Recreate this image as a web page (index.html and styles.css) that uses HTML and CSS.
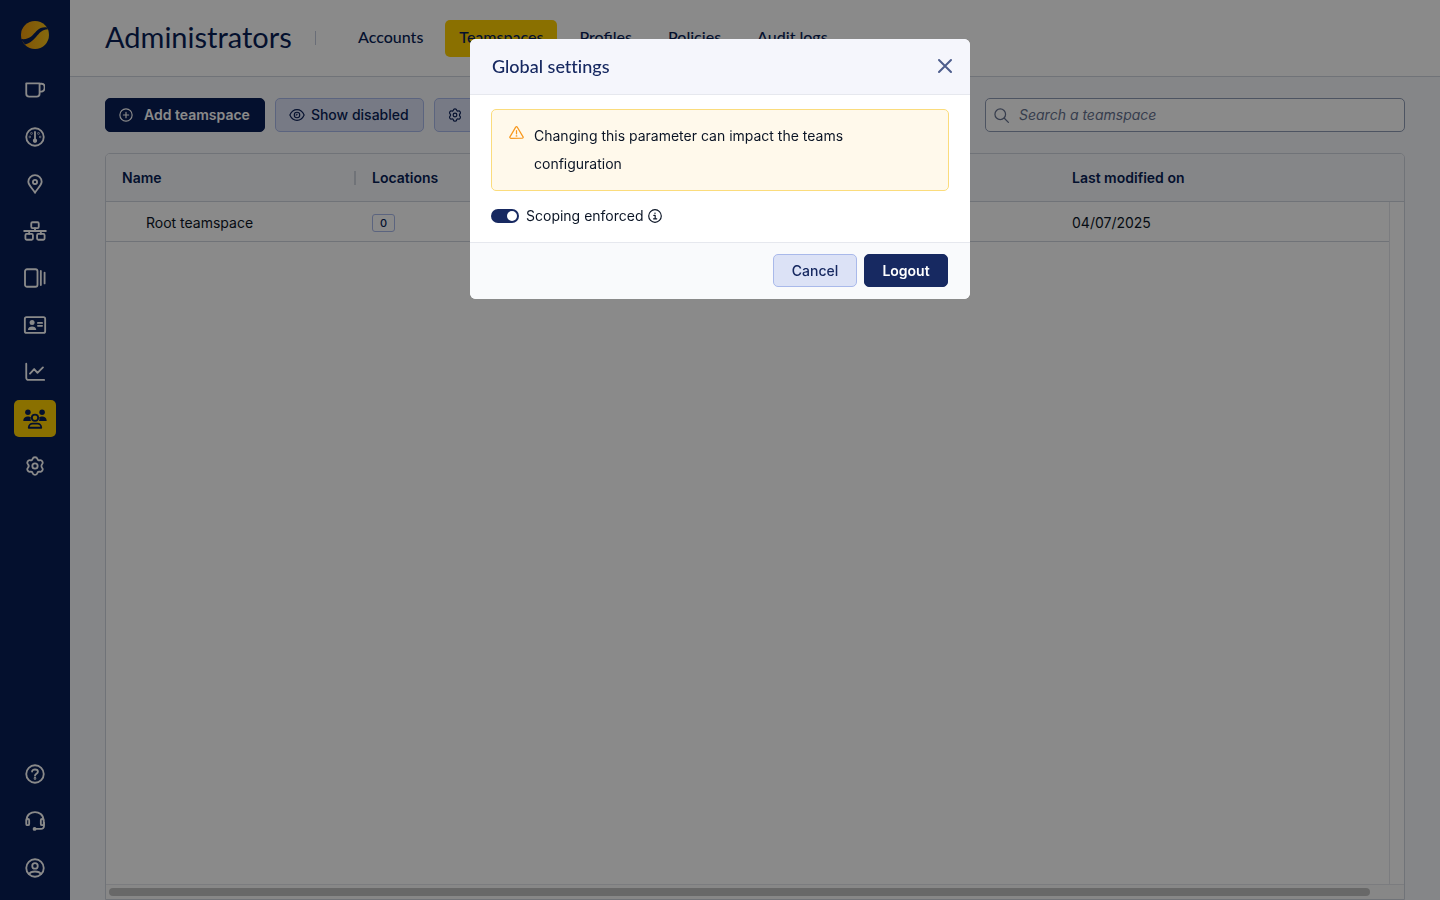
FILE: index.html
```
<!DOCTYPE html>
<html lang="en">
<head>
    <meta charset="UTF-8">
    <meta name="viewport" content="width=device-width, initial-scale=1.0">
    <title>Administrators</title>
    <link rel="stylesheet" href="styles.css">
</head>
<body>
    <!-- Shared icons -->
    <svg class="sprite" aria-hidden="true">
        <symbol id="gear" viewBox="0 0 24 24">
            <path d="M9.2 3.400 C9.800 0.800 14.200 0.800 14.800 3.400 C15.200 4.900 16.300 5.500 17.700 5.100 C20.300 4.400 22.500 8 20.600 9.800 C19.400 11 19.400 13 20.600 14.200 C22.500 16 20.300 19.600 17.700 18.900 C16.300 18.500 15.200 19.100 14.800 20.600 C14.200 23.200 9.800 23.200 9.200 20.600 C8.800 19.100 7.700 18.500 6.300 18.900 C3.700 19.600 1.500 16 3.400 14.200 C4.600 13 4.600 11 3.400 9.800 C1.500 8 3.700 4.400 6.300 5.100 C7.700 5.500 8.800 4.900 9.200 3.400 Z"/>
            <circle cx="12" cy="12" r="3.2"/>
        </symbol>
    </svg>

    <div class="app">
        <nav class="sidebar" aria-label="Main">
            <a href="#" class="logo" aria-label="Home">
                <svg viewBox="0 0 28 28">
                    <defs>
                        <linearGradient id="sun" x1="0" x2="1">
                            <stop offset="0" stop-color="#ee9a0c"/>
                            <stop offset="1" stop-color="#f6c31a"/>
                        </linearGradient>
                    </defs>
                    <circle cx="14" cy="14" r="14" fill="url(#sun)"/>
                    <path class="logo-wave" d="M0 18 C9 19 11.500 14 15.500 10 C19 6.800 22 6 26 6.500 L27 8.200 C21 8.200 18.500 12 15 16 C11.500 20 8 22.800 4 23.500 L2 21 Z"/>
                </svg>
            </a>
            <a href="#" class="nav-item" aria-label="Rooms">
                <svg class="icon" viewBox="0 0 24 24"><path d="M1.500 4 H17.500 V16.500 a3.500 3.500 0 0 1 -3.500 3.500 H5 a3.500 3.500 0 0 1 -3.500 -3.500 Z M17.500 4.500 H20 a3.500 3.500 0 0 1 3.500 3.500 v2 a4 4 0 0 1 -4 4 h-2"/></svg>
            </a>
            <a href="#" class="nav-item" aria-label="Dashboard">
                <svg class="icon" viewBox="0 0 24 24"><circle cx="12" cy="12" r="10.500"/><path d="M12 6 v9"/><circle class="solid" cx="12" cy="16.500" r="1.500"/><g class="solid"><circle cx="7.800" cy="7.800" r=".3"/><circle cx="16.200" cy="7.800" r=".3"/><circle cx="5.800" cy="12" r=".3"/><circle cx="18.200" cy="12" r=".3"/></g></svg>
            </a>
            <a href="#" class="nav-item" aria-label="Locations">
                <svg class="icon" viewBox="0 0 24 24"><path d="M12 22.500 C10 18.500 4 13.500 4 9.300 a8 8 0 0 1 16 0 C20 13.500 14 18.500 12 22.500 Z"/><circle cx="12" cy="9.500" r="2.500"/></svg>
            </a>
            <a href="#" class="nav-item" aria-label="Network">
                <svg class="icon icon-wide" viewBox="0 0 28 24"><rect x="9.500" y="1.500" width="9" height="7" rx="1.500"/><rect x="2.500" y="15.500" width="9" height="7" rx="1.500"/><rect x="16.500" y="15.500" width="9" height="7" rx="1.500"/><path d="M1 12 H27 M14 8.500 V12 M7 12 v3.500 M21 12 v3.500"/></svg>
            </a>
            <a href="#" class="nav-item" aria-label="Panels">
                <svg class="icon icon-wide" viewBox="0 0 28 24"><rect x="2" y="1.500" width="15" height="21" rx="2.500"/><path d="M21 3.500 V20.500 M25.500 5.500 V18.500"/></svg>
            </a>
            <a href="#" class="nav-item" aria-label="Contacts">
                <svg class="icon icon-wide" viewBox="0 0 28 24"><rect x="1.800" y="2.500" width="24.400" height="19" rx="2"/><path d="M17.500 9.500 H22.500 M17.500 13 H22.500"/><g class="filled"><circle cx="10.500" cy="9" r="3"/><path d="M5.500 18 C5.500 12.500 15.500 12.500 15.500 18 Z"/></g></svg>
            </a>
            <a href="#" class="nav-item" aria-label="Analytics">
                <svg class="icon" viewBox="0 0 24 24"><path d="M1.500 2 V19 a2.500 2.500 0 0 0 2.500 2.500 H23 M6 14 L11 8.500 L15 13 L21.500 6.500"/></svg>
            </a>
            <a href="#" class="nav-item active" aria-label="Administrators" aria-current="page">
                <svg class="icon icon-wide" viewBox="0 0 28 24"><g class="filled"><circle cx="5.500" cy="4" r="3.300"/><circle cx="22.500" cy="4" r="3.300"/><path d="M0 14.500 C0 8 7 8.500 9 10 C8.500 12 8.700 13 9.200 14.500 Z M28 14.500 C28 8 21 8.500 19 10 C19.500 12 19.300 13 18.800 14.500 Z"/></g><circle cx="14" cy="10.500" r="3.800"/><path d="M6.500 22.500 C6.500 19 9 17.500 11 17.500 h6 c2 0 4.500 1.500 4.500 5 Z"/></svg>
            </a>
            <a href="#" class="nav-item" aria-label="Settings">
                <svg class="icon"><use href="#gear"/></svg>
            </a>
            <div class="nav-bottom">
                <a href="#" class="nav-item" aria-label="Help">
                    <svg class="icon" viewBox="0 0 24 24"><circle cx="12" cy="12" r="10.500"/><path d="M8.500 9 C8.500 5.800 15.500 5.800 15.500 9.300 C15.500 11.700 12 11.600 12 14"/><circle class="solid" cx="12" cy="17.300" r=".5"/></svg>
                </a>
                <a href="#" class="nav-item" aria-label="Support">
                    <svg class="icon" viewBox="0 0 24 24"><path d="M2 10.500 C2 -1.800 22 -1.800 22 10.500 M22.800 14 V18 a3.500 3.500 0 0 1 -3.500 3.500 H12"/><rect x="1.500" y="9.500" width="3.500" height="7.500" rx="1.500"/><rect x="19" y="9.500" width="3.500" height="7.500" rx="1.500"/><circle class="solid" cx="11.500" cy="21.500" r="1.200"/></svg>
                </a>
                <a href="#" class="nav-item" aria-label="Profile">
                    <svg class="icon" viewBox="0 0 24 24"><circle cx="12" cy="12" r="10.500"/><circle cx="12" cy="9.500" r="3.300"/><path d="M5 19.300 C7 15.200 17 15.200 19 19.300"/></svg>
                </a>
            </div>
        </nav>

        <div class="content">
            <header class="page-header">
                <h1>Administrators</h1>
                <nav class="tabs" aria-label="Sections">
                    <a href="#" class="tab">Accounts</a>
                    <a href="#" class="tab active">Teamspaces</a>
                    <a href="#" class="tab">Profiles</a>
                    <a href="#" class="tab">Policies</a>
                    <a href="#" class="tab">Audit logs</a>
                </nav>
            </header>

            <main class="main">
                <div class="toolbar">
                    <button type="button" class="btn btn-primary btn-add">
                        <svg class="icon" viewBox="0 0 24 24"><circle cx="12" cy="12" r="10.500"/><path d="M12 7.500 v9 M7.500 12 h9"/></svg>
                        Add teamspace
                    </button>
                    <button type="button" class="btn btn-light">
                        <svg class="icon icon-eye" viewBox="0 0 28 24"><path d="M1.500 12 C7 -0.500 21 -0.500 26.500 12 C21 24.500 7 24.500 1.500 12 Z"/><circle cx="14" cy="12" r="4.800"/><path d="M14 10.500 a1.500 1.500 0 0 1 -1.500 1.500"/></svg>
                        Show disabled
                    </button>
                    <button type="button" class="btn btn-light btn-settings" aria-label="Settings">
                        <svg class="icon"><use href="#gear"/></svg>
                    </button>
                    <label class="search">
                        <svg class="icon" viewBox="0 0 24 24"><circle cx="10" cy="10" r="8.500"/><path d="M16.500 16.500 L23 23"/></svg>
                        <input type="search" placeholder="Search a teamspace" aria-label="Search a teamspace">
                    </label>
                </div>

                <section class="grid">
                    <table>
                        <colgroup>
                            <col class="col-name">
                            <col class="col-locations">
                            <col>
                            <col class="col-gutter">
                        </colgroup>
                        <thead>
                            <tr>
                                <th scope="col"><span class="th-label">Name</span></th>
                                <th scope="col">Locations</th>
                                <th scope="col">Last modified on</th>
                                <td></td>
                            </tr>
                        </thead>
                        <tbody>
                            <tr>
                                <td class="cell-name">Root teamspace</td>
                                <td><span class="count">0</span></td>
                                <td>04/07/2025</td>
                                <td class="gutter"></td>
                            </tr>
                        </tbody>
                    </table>
                    <div class="grid-space"></div>
                    <div class="scrollbar"><div class="thumb"></div></div>
                </section>
            </main>
        </div>
    </div>

    <div class="overlay">
        <div class="modal" role="dialog" aria-modal="true" aria-labelledby="modal-title">
            <div class="modal-header">
                <h2 id="modal-title">Global settings</h2>
                <button type="button" class="close" aria-label="Close">
                    <svg class="icon" viewBox="0 0 16 16"><path d="M2 2 L14 14 M14 2 L2 14"/></svg>
                </button>
            </div>
            <div class="modal-body">
                <div class="alert" role="alert">
                    <svg class="icon" viewBox="0 0 24 24"><path d="M10.700 3.500 a1.500 1.500 0 0 1 2.600 0 L22.500 19 a1.500 1.500 0 0 1 -1.300 2.200 H2.800 a1.500 1.500 0 0 1 -1.300 -2.200 Z M12 9 v5"/><circle class="solid" cx="12" cy="17.500" r=".4"/></svg>
                    <p>Changing this parameter can impact the teams configuration</p>
                </div>
                <div class="field">
                    <input type="checkbox" class="switch" id="scoping" checked>
                    <label for="scoping">Scoping enforced</label>
                    <svg class="icon" viewBox="0 0 24 24"><circle cx="12" cy="12" r="10.800"/><path d="M10 11 h2.300 v5.500 M9.500 16.800 h5.500"/><circle class="solid" cx="12" cy="7.200" r=".4"/></svg>
                </div>
            </div>
            <div class="modal-footer">
                <button type="button" class="btn btn-light">Cancel</button>
                <button type="button" class="btn btn-primary">Logout</button>
            </div>
        </div>
    </div>
</body>
</html>
```
FILE: styles.css
```
* {
    box-sizing: border-box;
}
body {
    margin: 0;
    font-family: Inter, "Liberation Sans", sans-serif;
    font-size: 14px;
    color: #0b1526;
}
h1, h2, p {
    margin: 0;
}
button, input {
    font: inherit;
}
.sprite {
    display: none;
}
.icon {
    flex: none;
    width: 20px;
    height: 20px;
    fill: none;
    stroke: currentColor;
    stroke-width: 2;
    stroke-linecap: round;
    stroke-linejoin: round;
}
.icon .filled {
    fill: currentColor;
    stroke: none;
}
.icon .solid {
    fill: currentColor;
}
.icon-wide {
    width: 24px;
}
.app {
    display: flex;
    min-height: 100vh;
}

/* Sidebar */
.sidebar {
    display: flex;
    flex-direction: column;
    align-items: center;
    gap: 10px;
    flex: none;
    width: 70px;
    padding: 21px 0 14px;
    background-color: #091e56;
}
.logo {
    height: 28px;
    margin-bottom: 12px;
}
.logo svg {
    width: 28px;
    height: 28px;
}
.logo-wave {
    fill: #091e56;
}
.nav-item {
    display: flex;
    align-items: center;
    justify-content: center;
    width: 42px;
    height: 37px;
    border-radius: 5px;
    color: #fff;
}
.nav-item .icon {
    stroke-width: 2.200;
}
.nav-item.active {
    background-color: #ffcf00;
    color: #091e56;
}
.nav-bottom {
    display: flex;
    flex-direction: column;
    gap: 10px;
    margin-top: auto;
}

/* Header */
.content {
    display: flex;
    flex-direction: column;
    flex: 1;
    min-width: 0;
}
.page-header {
    display: flex;
    align-items: center;
    height: 77px;
    padding: 0 35px;
    border-bottom: 1px solid #d0d4de;
    background-color: #fff;
    font-family: Lato, "Open Sans", sans-serif;
    color: #091e56;
}
.page-header h1 {
    flex: none;
    width: 210px;
    padding-bottom: 4px;
    font-size: 29px;
    font-weight: 400;
}
.tabs {
    display: flex;
    gap: 8px;
    align-items: center;
}
.tabs::before {
    content: "";
    width: 1px;
    height: 14px;
    margin-right: 20px;
    background-color: #c3c9dc;
}
.tab {
    padding: 0 14px 4px;
    border-radius: 5px;
    font-size: 16px;
    font-weight: 500;
    line-height: 33px;
    color: inherit;
    text-decoration: none;
}
.tab.active {
    background-color: #ffcf00;
}

/* Toolbar */
.main {
    display: flex;
    flex-direction: column;
    gap: 21px;
    flex: 1;
    padding: 21px 35px 0;
    background-color: #f5f7fb;
}
.toolbar {
    display: flex;
    gap: 10px;
}
.btn {
    display: flex;
    align-items: center;
    justify-content: center;
    height: 34px;
    padding: 0 14px 0 13px;
    border: 1px solid #a9b9ea;
    border-radius: 5px;
    line-height: 16px;
    cursor: pointer;
}
.btn-primary {
    border-color: #172961;
    background-color: #172961;
    color: #fff;
    font-weight: 600;
}
.btn-light {
    background-color: #dce2f6;
    color: #172961;
    font-weight: 500;
}
.btn .icon {
    width: 14px;
    height: 14px;
}
.btn .icon-eye {
    width: 16px;
    margin-right: 6px;
}
.toolbar .btn-primary {
    border-color: #091e56;
    background-color: #091e56;
}
.toolbar .btn-light {
    color: #091e56;
}
.btn-add {
    gap: 11px;
}
.btn-settings {
    justify-content: flex-start;
    width: 150px;
}
.search {
    display: flex;
    align-items: center;
    gap: 10px;
    width: 420px;
    height: 34px;
    margin-left: auto;
    padding: 0 8px;
    border: 1px solid #8f9bb5;
    border-radius: 5px;
    background-color: #fff;
    color: #66728f;
}
.search .icon {
    width: 15px;
    height: 15px;
}
.search input {
    flex: 1;
    min-width: 0;
    height: 16px;
    padding: 0;
    border: 0;
    outline: 0;
    background: none;
    line-height: 16px;
}
.search input::placeholder {
    color: #66728f;
    font-style: italic;
    opacity: 1;
}

/* Teamspace grid */
.grid {
    display: flex;
    flex-direction: column;
    flex: 1;
    overflow: hidden;
    border: 1px solid #d0d4de;
    border-radius: 5px 5px 0 0;
    background-color: #fff;
}
table {
    width: 100%;
    table-layout: fixed;
    border-collapse: separate;
    border-spacing: 0;
}
.col-name {
    width: 250px;
}
.col-locations {
    width: 700px;
}
.col-gutter {
    width: 15px;
}
th, td {
    padding: 0 0 0 16px;
    text-align: left;
    border-bottom: 1px solid #d0d4de;
}
thead th, thead td {
    height: 48px;
    background-color: #f5f7fb;
    color: #091e56;
    font-weight: 600;
}
.th-label {
    display: block;
    border-right: 2px solid #d0d4de;
    line-height: 14px;
}
tbody td {
    height: 40px;
    padding-top: 2px;
}
tbody .cell-name {
    padding-left: 40px;
}
tbody .gutter {
    padding: 0;
    border-bottom: 0;
    border-left: 1px solid #e3e5ea;
}
.count {
    display: block;
    width: 23px;
    border: 1px solid #a9b9ea;
    border-radius: 3px;
    color: #091e56;
    font-size: 11px;
    font-weight: 500;
    line-height: 16px;
    text-align: center;
}
.grid-space {
    flex: 1;
    margin-right: 14px;
    border-right: 1px solid #e3e5ea;
}
.scrollbar {
    height: 15px;
    padding: 3px 34px 0 3px;
    border-top: 1px solid #e3e5ea;
    background-color: #fafafa;
}
.thumb {
    height: 8px;
    border-radius: 4px;
    background-color: #c1c1c1;
}

/* Modal */
.overlay {
    position: fixed;
    inset: 0;
    padding-top: 39px;
    background-color: rgba(0, 0, 0, 0.46);
}
.modal {
    width: 500px;
    max-width: 100%;
    margin: 0 auto;
    overflow: hidden;
    border-radius: 6px;
    background-color: #fff;
}
.modal-header {
    display: flex;
    align-items: center;
    justify-content: space-between;
    height: 56px;
    padding: 0 17px 2px 22px;
    border-bottom: 1px solid #e6e8ee;
    background-color: #f5f6fc;
}
.modal-header h2 {
    font-family: Lato, "Open Sans", sans-serif;
    font-size: 18px;
    font-weight: 500;
    font-variant-ligatures: none;
    color: #172961;
}
.close {
    display: flex;
    padding: 0;
    border: 0;
    background: none;
    color: #4d5d8c;
    cursor: pointer;
}
.close .icon {
    width: 16px;
    height: 16px;
}
.modal-body {
    padding: 14px 21px 16px;
}
.alert {
    display: flex;
    gap: 10px;
    padding: 12px 17px;
    border: 1px solid #fbdc7c;
    border-radius: 5px;
    background-color: #fff9eb;
}
.alert .icon {
    width: 15px;
    height: 15px;
    margin-top: 3px;
    color: #f8981d;
}
.alert p {
    max-width: 340px;
    line-height: 28px;
}
.field {
    display: flex;
    align-items: center;
    height: 20px;
    margin-top: 15px;
}
.field label {
    margin: 0 4px 0 7px;
    line-height: 18px;
}
.field .icon {
    width: 14px;
    height: 14px;
}
.switch {
    display: flex;
    align-items: center;
    justify-content: flex-end;
    appearance: none;
    width: 28px;
    height: 14px;
    margin: 0;
    padding: 0 2px;
    border-radius: 7px;
    background-color: #a3acc6;
}
.switch::before {
    content: "";
    width: 10px;
    height: 10px;
    border-radius: 50%;
    background-color: #fff;
}
.switch:checked {
    background-color: #172961;
}
.switch:not(:checked) {
    justify-content: flex-start;
}
.modal-footer {
    display: flex;
    justify-content: flex-end;
    gap: 7px;
    padding: 11px 22px 12px;
    border-top: 1px solid #e6e8ee;
    background-color: #f9fafc;
}
.modal-footer .btn {
    width: 84px;
    height: 33px;
    padding: 0;
}
```
